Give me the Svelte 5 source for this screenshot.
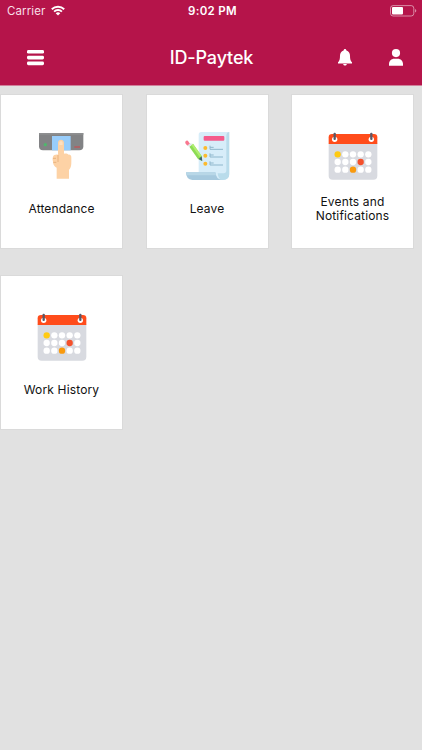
<script lang="ts">
  type Tile = { label: string; icon: "scanner" | "form" | "calendar" };

  const tiles: Tile[] = [
    { label: "Attendance", icon: "scanner" },
    { label: "Leave", icon: "form" },
    { label: "Events and Notifications", icon: "calendar" },
    { label: "Work History", icon: "calendar" },
  ];

  // Calendar days, row by row; null leaves the day white.
  const days = [
    ["#ffca12", null, null, null, null],
    [null, null, null, "#f4512c", null],
    [null, null, "#f99a0e", null, null],
  ];
</script>

<div class="screen">
  <header>
    <div class="status">
      <div class="carrier">
        <span>Carrier</span>
        <svg width="14" height="11" viewBox="0 0 14 11" fill="none" stroke="#fff" stroke-width="1.9">
          <path d="M0.8 4.2a8.9 8.9 0 0 1 12.4 0" />
          <path d="M3.1 6.6a5.6 5.6 0 0 1 7.8 0" />
          <path d="M7 10.6 4.7 8.3a3.3 3.3 0 0 1 4.6 0z" fill="#fff" stroke="none" />
        </svg>
      </div>
      <div class="time">9:02 PM</div>
      <svg class="battery" width="27" height="12" viewBox="0 0 27 12">
        <rect x="0.5" y="0.6" width="23.3" height="10.4" rx="2.6" fill="none" stroke="#fff" stroke-opacity="0.5" />
        <rect x="2" y="2.1" width="11" height="7.3" rx="1" fill="#fff" />
        <path d="M25 4c1.8.6 1.8 3 0 3.6z" fill="#fff" fill-opacity="0.5" />
      </svg>
    </div>
    <nav>
      <button class="menu" aria-label="Menu">
        <svg width="17" height="16" viewBox="0 0 17 16" fill="#fff">
          <rect y="0" width="17" height="3.6" rx="1.4" />
          <rect y="5.8" width="17" height="3.6" rx="1.4" />
          <rect y="11.6" width="17" height="3.6" rx="1.4" />
        </svg>
      </button>
      <h1>ID-Paytek</h1>
      <button class="bell" aria-label="Notifications">
        <svg width="14" height="17" viewBox="0 0 14 17" fill="#fff">
          <path d="M7 0c.8 0 1.4.6 1.4 1.5C10.8 2.2 12 4.2 12 6.8c0 3.6.5 5.2 2 6.5v1.2H0v-1.2c1.5-1.3 2-2.9 2-6.5 0-2.6 1.2-4.6 3.6-5.3C5.6.6 6.2 0 7 0z" />
          <path d="M5.2 15h3.6c-.2 1-.9 1.6-1.8 1.6S5.4 16 5.2 15z" />
        </svg>
      </button>
      <button class="user" aria-label="Profile">
        <svg width="14" height="17" viewBox="0 0 14 17" fill="#fff">
          <circle cx="7" cy="4.1" r="4.1" />
          <path d="M0 16.8v-1.5c0-3.5 2.3-5.6 5.3-5.6h3.4c3 0 5.3 2.1 5.3 5.6v1.5z" />
        </svg>
      </button>
    </nav>
  </header>

  <main>
    {#each tiles as tile (tile.label)}
      <div class="tile">
        {#if tile.icon === "scanner"}
          <svg class="icon" viewBox="21 36 150 150">
            <path d="M27 39h133v40q0 12-12 12H39q-12 0-12-12z" fill="#828385" />
            <path d="M27 39h133v5H27z" fill="#8e8f91" />
            <path d="M66 48h56v43H66z" fill="#98cdfb" />
            <circle cx="46" cy="74" r="5" fill="#4fb76c" />
            <path d="M133 81h17" stroke="#c25358" stroke-width="4" />
            <path d="M84 104c-7-1-14 1-15 6-2 5-1 10 0 15 0 8 4 14 11 18v33h37v-26c7-8 7-17 7-25v-13c0-7-5-9-9-8-3-4-8-4-13-3V68c0-12-18-12-18 0z" fill="#fdd2a5" />
            <path d="M84 105v21M69 115h9M70 127h9" stroke="#e9b27e" stroke-width="3" fill="none" />
            <path d="M88 75v-6c0-7 10-7 10 0v6z" fill="#ffe0bf" />
          </svg>
        {:else if tile.icon === "form"}
          <svg class="icon" viewBox="18 36 150 150">
            <path d="M68 44q0-8 8-8h83q-6 3-6 12v118q0 14-14 14H68z" fill="#d7edf9" />
            <path d="M151 48q0-12 9-12v126q0 18-21 18-12 0-14-20h18q8 0 8-9z" fill="#b9dceb" />
            <path d="M30 157h88q2 22 21 23H49q-19-2-19-23z" fill="#a6c9de" />
            <path d="M30 157h88l2 9H32z" fill="#b8d7e7" />
            <rect x="83" y="48" width="62" height="14" rx="3" fill="#f45b8b" />
            {#each [84, 107, 131] as y}
              <circle cx="88" cy={y} r="6" fill="#fcba2d" />
              <path d="M102 {y - 7}v11h39M102 {y - 2}h11" stroke="#8fb7cc" stroke-width="3" fill="none" />
            {/each}
            <path d="M40 80l11-9 26 37 1 15-12-6z" fill="#8cdc55" />
            <path d="M46 75l5-4 26 37-6 3z" fill="#b0ee70" />
            <path d="M28 70q-2-6 3-8 5-1 7 4l4 5-8 6z" fill="#f9778f" />
            <path d="M34 77l9-7 7 2-10 8z" fill="#dfe7e9" />
            <path d="M68 117l9-8 2 14z" fill="#41606e" />
          </svg>
        {:else}
          <svg class="icon" viewBox="22 36 150 150">
            <path d="M24 70h146v97q0 12-12 12H36q-12 0-12-12z" fill="#d8dae0" />
            <path d="M24 72V52q0-10 10-10h126q10 0 10 10v20z" fill="#ff4c1b" />
            {#each [42, 152] as x}
              <circle cx={x} cy="58" r="8" fill="#fff" />
              <rect x={x - 3.5} y="38" width="7" height="22" rx="3" fill="#5c5866" />
            {/each}
            {#each days as row, r}
              {#each row as color, c}
                <circle cx={51 + c * 23} cy={103 + r * 23} r="9.5" fill={color ?? "#fff"} />
              {/each}
            {/each}
          </svg>
        {/if}
        <div class="label"><span>{tile.label}</span></div>
      </div>
    {/each}
  </main>
</div>

<style>
  :global(body) {
    background: #e1e1e1;
  }
  .screen {
    width: 422px;
    height: 750px;
    overflow: hidden;
    background: #e1e1e1;
    font-family: Inter, "Liberation Sans", sans-serif;
  }
  header {
    height: 85px;
    background: #b5144a;
    border-bottom: 1px solid #d07f9a;
    color: #fff;
  }
  .status {
    display: grid;
    grid-template-columns: 1fr auto 1fr;
    align-items: center;
    height: 22px;
    padding: 0 5px 0 7px;
  }
  .carrier {
    display: flex;
    align-items: center;
    gap: 6px;
    font-size: 11.5px;
    line-height: 14px;
    letter-spacing: 0.1px;
    color: #f8dfe7;
  }
  .carrier svg {
    margin-bottom: 1px;
  }
  .time {
    padding: 0 0 1px 1px;
    font-size: 11.5px;
    font-weight: 600;
    line-height: 14px;
    letter-spacing: 0.3px;
  }
  .battery {
    justify-self: end;
  }
  nav {
    display: grid;
    grid-template-columns: 70px 1fr 51px 51px;
    align-items: center;
    height: 63px;
    padding: 8px 1px 0 0;
    box-sizing: border-box;
  }
  button {
    display: flex;
    padding: 0;
    border: 0;
    background: none;
    justify-self: center;
  }
  h1 {
    margin: 0 0 0 34px;
    font-size: 18px;
    font-weight: 500;
    line-height: 22px;
    letter-spacing: -0.15px;
    text-align: center;
  }
  main {
    display: grid;
    grid-template-columns: repeat(3, 123px);
    gap: 26px 22.5px;
    padding-top: 8px;
  }
  .tile {
    display: flex;
    flex-direction: column;
    align-items: center;
    height: 155px;
    padding-top: 37px;
    box-sizing: border-box;
    background: #fff;
    border: 1px solid #dadada;
  }
  .icon {
    width: 50px;
    height: 50px;
  }
  .label {
    display: flex;
    align-items: center;
    justify-content: center;
    width: 90px;
    height: 28px;
    margin-top: 13px;
    text-align: center;
    font-size: 12px;
    line-height: 14px;
    letter-spacing: 0.15px;
    color: #111;
  }
</style>
